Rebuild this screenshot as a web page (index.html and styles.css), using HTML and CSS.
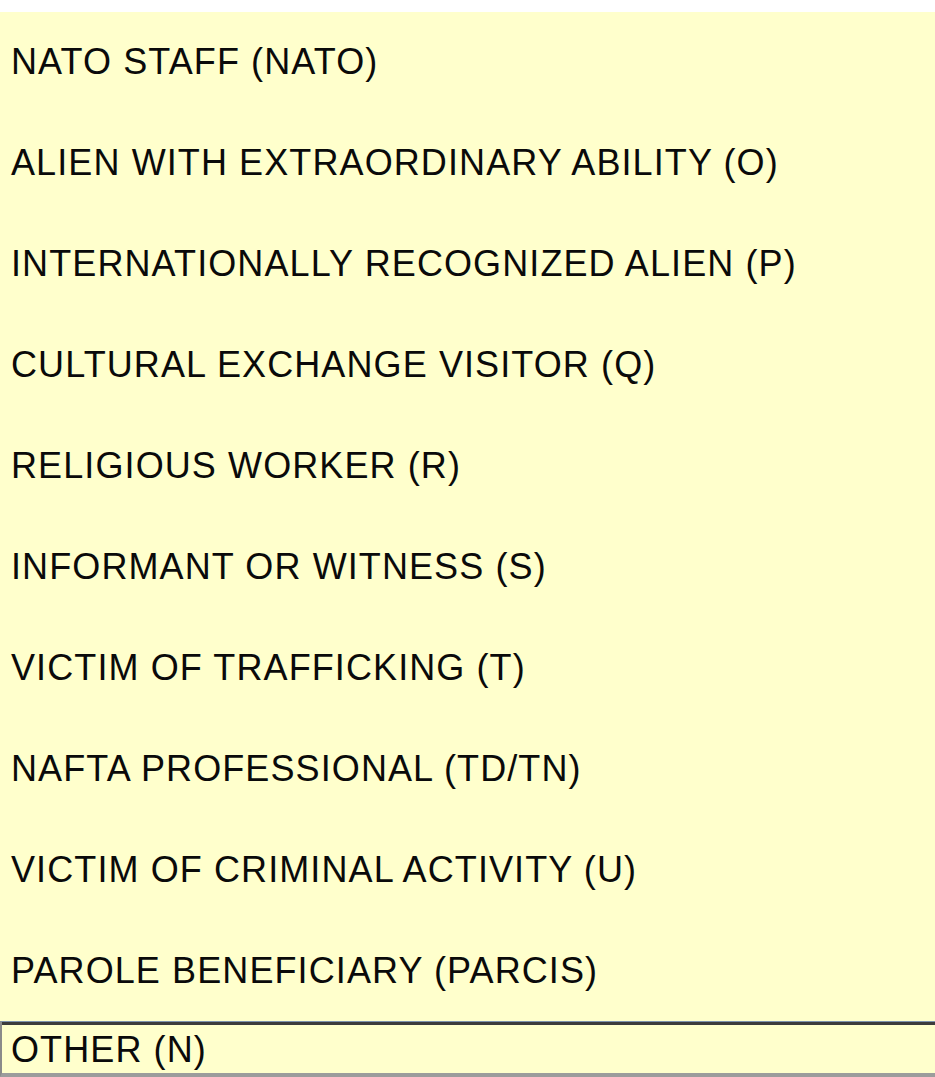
FILE: index.html
```html
<!DOCTYPE html>
<html lang="en">
<head>
<meta charset="utf-8">
<title>Visa category</title>
<link rel="stylesheet" href="styles.css">
</head>
<body>
<div class="dropdown">
  <ul class="options">
    <li class="option">NATO STAFF (NATO)</li>
    <li class="option">ALIEN WITH EXTRAORDINARY ABILITY (O)</li>
    <li class="option">INTERNATIONALLY RECOGNIZED ALIEN (P)</li>
    <li class="option">CULTURAL EXCHANGE VISITOR (Q)</li>
    <li class="option">RELIGIOUS WORKER (R)</li>
    <li class="option">INFORMANT OR WITNESS (S)</li>
    <li class="option">VICTIM OF TRAFFICKING (T)</li>
    <li class="option">NAFTA PROFESSIONAL (TD/TN)</li>
    <li class="option">VICTIM OF CRIMINAL ACTIVITY (U)</li>
    <li class="option">PAROLE BENEFICIARY (PARCIS)</li>
  </ul>
  <div class="select">
    <span class="select-value">OTHER (N)</span>
  </div>
</div>
</body>
</html>
```

FILE: styles.css
```css
html, body {
  margin: 0;
  padding: 0;
  background: #ffffff;
}

body {
  font-family: "Liberation Sans", Arial, sans-serif;
  color: #0a0a0a;
  padding-top: 12px;
}

.dropdown {
  background: #ffffcc;
  display: flex;
  flex-direction: column;
}

.options {
  list-style: none;
  margin: 0;
  padding: 0;
}

.option {
  height: 101px;
  line-height: 101px;
  font-size: 36px;
  letter-spacing: 1.1px;
  padding-left: 11px;
  white-space: nowrap;
}

.options .option:first-child {
  height: 100px;
  line-height: 99px;
}

.select {
  height: 48px;
  border-top: 1px solid #7d92ad;
  box-shadow: inset 0 3px 0 #3c3c3c;
  padding-top: 3px;
  border-bottom: 4px solid #9c9c9c;
  border-left: 2px solid #8a8a8a;
  box-sizing: content-box;
  display: flex;
  align-items: center;
}

.select-value {
  font-size: 36px;
  letter-spacing: 1.1px;
  line-height: 48px;
  padding-left: 9px;
  padding-top: 2px;
}
```
